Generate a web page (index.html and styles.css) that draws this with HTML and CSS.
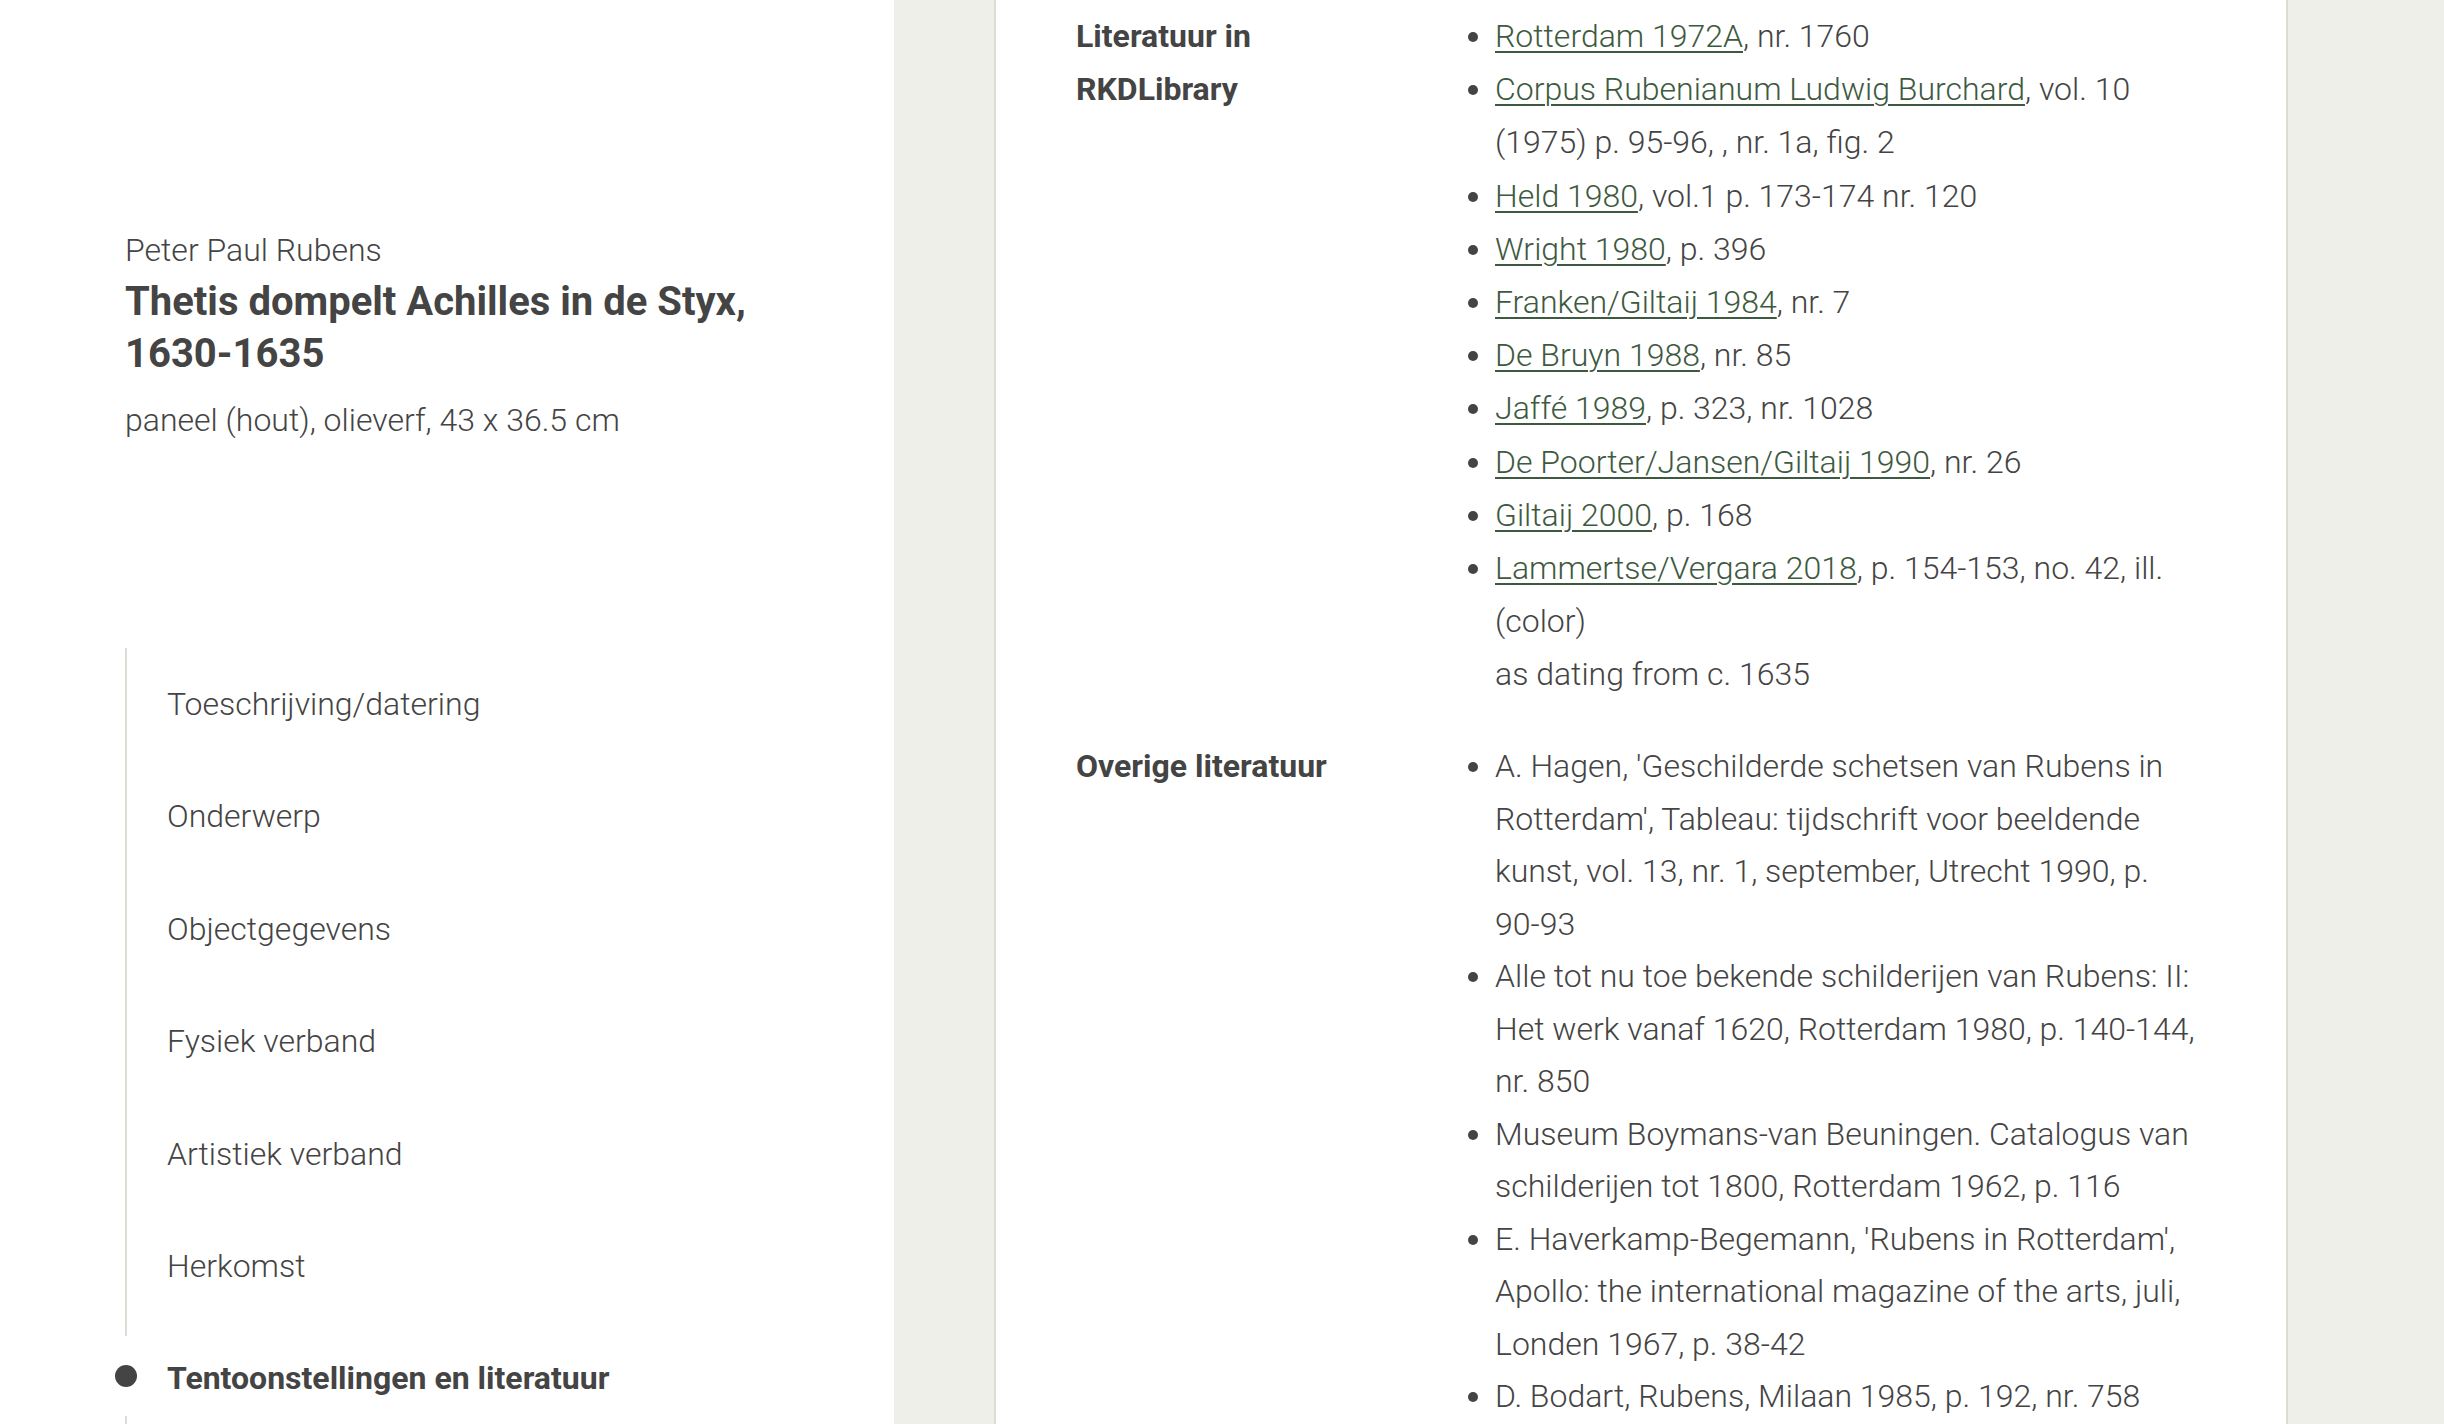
FILE: index.html
```html
<!DOCTYPE html>
<html lang="nl">
<head>
<meta charset="utf-8">
<title>Thetis dompelt Achilles in de Styx</title>
<link rel="stylesheet" href="styles.css">
</head>
<body>
<div class="page">
  <aside class="side">
    <div class="head">
      <p class="artist">Peter Paul Rubens</p>
      <h1 class="title">Thetis dompelt Achilles in de Styx, 1630-1635</h1>
      <p class="medium">paneel (hout), olieverf, 43 x 36.5 cm</p>
    </div>
    <ul class="toc">
      <li class="toc-item">Toeschrijving/datering</li>
      <li class="toc-item">Onderwerp</li>
      <li class="toc-item">Objectgegevens</li>
      <li class="toc-item">Fysiek verband</li>
      <li class="toc-item">Artistiek verband</li>
      <li class="toc-item">Herkomst</li>
      <li class="toc-item active">Tentoonstellingen en literatuur</li>
    </ul>
  </aside>
  <main class="main">
    <section class="card">
      <div class="row">
        <div class="label">Literatuur in RKDLibrary</div>
        <ul class="refs refs-rkd">
          <li><a href="#">Rotterdam 1972A</a>, nr. 1760</li>
          <li><a href="#">Corpus Rubenianum Ludwig Burchard</a>, vol. 10 (1975) p. 95-96, , nr. 1a, fig. 2</li>
          <li><a href="#">Held 1980</a>, vol.1 p. 173-174 nr. 120</li>
          <li><a href="#">Wright 1980</a>, p. 396</li>
          <li><a href="#">Franken/Giltaij 1984</a>, nr. 7</li>
          <li><a href="#">De Bruyn 1988</a>, nr. 85</li>
          <li><a href="#">Jaffé 1989</a>, p. 323, nr. 1028</li>
          <li><a href="#">De Poorter/Jansen/Giltaij 1990</a>, nr. 26</li>
          <li><a href="#">Giltaij 2000</a>, p. 168</li>
          <li><a href="#">Lammertse/Vergara 2018</a>, p. 154-153, no. 42, ill. (color)<br>as dating from c. 1635</li>
        </ul>
      </div>
      <div class="row">
        <div class="label">Overige literatuur</div>
        <ul class="refs refs-other">
          <li>A. Hagen, 'Geschilderde schetsen van Rubens in Rotterdam', Tableau: tijdschrift voor beeldende kunst, vol. 13, nr. 1, september, Utrecht 1990, p. 90-93</li>
          <li>Alle tot nu toe bekende schilderijen van Rubens: II: Het werk vanaf 1620, Rotterdam 1980, p. 140-144, nr. 850</li>
          <li>Museum Boymans-van Beuningen. Catalogus van schilderijen tot 1800, Rotterdam 1962, p. 116</li>
          <li>E. Haverkamp-Begemann, 'Rubens in Rotterdam', Apollo: the international magazine of the arts, juli, Londen 1967, p. 38-42</li>
          <li>D. Bodart, Rubens, Milaan 1985, p. 192, nr. 758</li>
        </ul>
      </div>
    </section>
  </main>
</div>
</body>
</html>
```

FILE: styles.css
```css
html, body {
  margin: 0;
  padding: 0;
  background: #ffffff;
}

body {
  font-family: Roboto, "Liberation Sans", sans-serif;
  font-weight: 300;
  color: #444444;
  font-size: 32px;
}

.page {
  display: grid;
  grid-template-columns: 894px 1fr;
  height: 1424px;
  overflow: hidden;
}

.side {
  background: #ffffff;
  padding: 229px 125px 0 125px;
}

.head {
  margin-bottom: 207px;
}

.artist {
  margin: 0;
  font-size: 32px;
  line-height: 42px;
}

.title {
  margin: 5px 0 0 0;
  font-size: 40px;
  line-height: 51.5px;
  font-weight: 700;
  color: #444444;
}

.medium {
  margin: 20px 0 0 0;
  font-size: 32px;
  line-height: 42px;
}

.toc {
  list-style: none;
  margin: 0;
  padding: 0;
  border-left: 2px solid #dddcd3;
  position: relative;
}

.toc-item {
  height: 112.4px;
  line-height: 112.4px;
  padding-left: 40px;
  font-size: 32px;
  position: relative;
}

.toc-item.active {
  font-weight: 700;
}

.toc-item.active::before {
  content: "";
  position: absolute;
  left: -12px;
  top: 43px;
  width: 22px;
  height: 22px;
  border-radius: 50%;
  background: #444444;
  box-shadow: 0 0 0 29px #ffffff;
}

.main {
  background: #efefea;
  padding: 0 156px 0 100px;
}

.card {
  background: #ffffff;
  border-left: 2px solid #dddcd3;
  border-right: 2px solid #dddcd3;
  padding: 10px 87px 0 80px;
  min-height: 1424px;
  box-sizing: border-box;
}

.row {
  display: grid;
  grid-template-columns: 419px 1fr;
  margin-bottom: 38.5px;
}

.label {
  font-weight: 700;
  line-height: 53px;
  padding-right: 120px;
}

.refs {
  margin: 0;
  padding: 0;
  list-style: disc outside;
}

.refs-rkd {
  line-height: 53.2px;
}

.refs-other {
  line-height: 52.5px;
}

.refs a {
  color: #3d5a40;
  text-decoration: underline;
  text-underline-offset: 4px;
  text-decoration-thickness: 2px;
}
```
